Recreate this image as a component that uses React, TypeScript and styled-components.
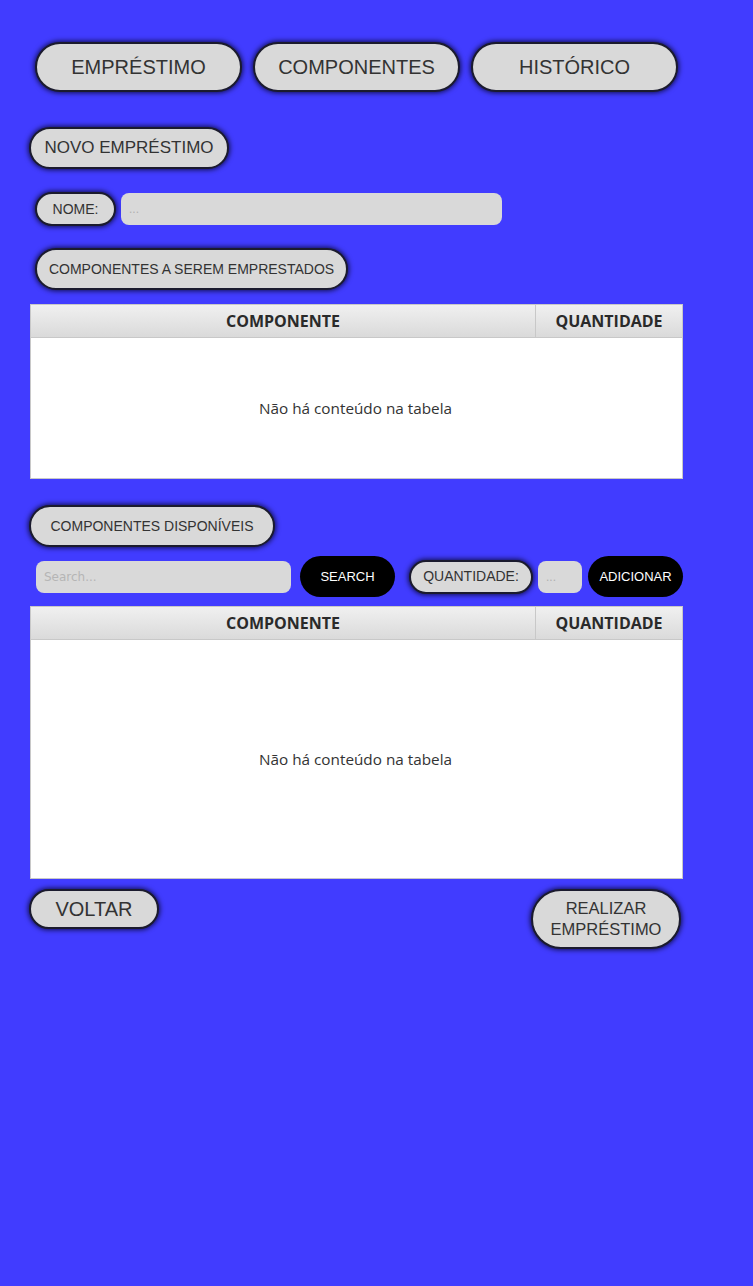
import React from "react";
import styled, { createGlobalStyle } from "styled-components";

const Global = createGlobalStyle`
  html, body { margin: 0; padding: 0; background: #413cff; }
  body { font-family: "Liberation Sans", Arial, sans-serif; min-height: 1286px; }
  * { box-sizing: border-box; }
`;

const Page = styled.div`
  min-height: 1286px;
  background: #413cff;
  padding: 42px 0 0 29px;
  width: 753px;
`;

const Nav = styled.nav`
  display: flex;
  gap: 11px;
  padding-left: 6px;
`;

const Pill = styled.div<{ $w?: number; $h: number; $fs: number; $lh?: number }>`
  display: inline-flex;
  align-items: center;
  justify-content: center;
  text-align: center;
  width: ${(p) => (p.$w ? `${p.$w}px` : "auto")};
  height: ${(p) => p.$h}px;
  padding: 0 12px;
  background: #d9d9d9;
  color: #333;
  font-size: ${(p) => p.$fs}px;
  line-height: ${(p) => p.$lh ?? 1.2};
  border: 2px solid #1b1b2e;
  border-radius: 999px;
  box-shadow: 0 0 5px 1px rgba(0, 0, 20, 0.75);
  white-space: nowrap;
`;

const Section = styled.div<{ $mt: number; $ml?: number }>`
  margin-top: ${(p) => p.$mt}px;
  margin-left: ${(p) => p.$ml ?? 0}px;
  display: flex;
  align-items: center;
`;

const TextInput = styled.input<{ $w: number; $h?: number }>`
  width: ${(p) => p.$w}px;
  height: ${(p) => p.$h ?? 32}px;
  background: #d9d9d9;
  border: none;
  border-radius: 8px;
  padding: 0 8px;
  font-family: "Liberation Sans", Arial, sans-serif;
  font-size: 12px;
  outline: none;
  &::placeholder { color: #b0b0b0; }
`;

const SearchInput = styled(TextInput)`
  font-family: "DejaVu Sans", sans-serif;
  font-size: 12px;
  &::placeholder { color: #b5b5b5; }
`;

const BlackButton = styled.button`
  width: 95px;
  height: 41px;
  border: none;
  border-radius: 999px;
  background: #000;
  color: #fff;
  font-family: "Liberation Sans", Arial, sans-serif;
  font-size: 13px;
  padding: 0;
`;

const Table = styled.div<{ $h: number }>`
  width: 653px;
  height: ${(p) => p.$h}px;
  border: 1px solid #c8c8c8;
  background: #fff;
  display: flex;
  flex-direction: column;
  font-family: "Open Sans", "Noto Sans", sans-serif;
`;

const HeadRow = styled.div`
  display: grid;
  grid-template-columns: 505px 1fr;
  height: 33px;
  border-bottom: 1px solid #c8c8c8;
  background: linear-gradient(#f0f0f0, #dadada);
`;

const HeadCell = styled.div<{ $last?: boolean }>`
  display: flex;
  align-items: center;
  justify-content: center;
  font-weight: 700;
  font-size: 16px;
  color: #2a2a2a;
  border-right: ${(p) => (p.$last ? "none" : "1px solid #c8c8c8")};
`;

const Empty = styled.div`
  flex: 1;
  display: flex;
  align-items: center;
  justify-content: center;
  font-size: 15.3px;
  color: #333;
  padding-right: 2px;
`;

const Footer = styled.div`
  margin-top: 10px;
  width: 652px;
  display: flex;
  justify-content: space-between;
  align-items: flex-start;
`;

const DataTable = ({ h }: { h: number }) => (
  <Table $h={h}>
    <HeadRow>
      <HeadCell>COMPONENTE</HeadCell>
      <HeadCell $last>QUANTIDADE</HeadCell>
    </HeadRow>
    <Empty>Não há conteúdo na tabela</Empty>
  </Table>
);

export default function App() {
  return (
    <>
      <Global />
      <Page>
        <Nav>
          <Pill $w={207} $h={50} $fs={20}>EMPRÉSTIMO</Pill>
          <Pill $w={207} $h={50} $fs={20}>COMPONENTES</Pill>
          <Pill $w={207} $h={50} $fs={20}>HISTÓRICO</Pill>
        </Nav>

        <Section $mt={35}>
          <Pill $w={200} $h={42} $fs={17}>NOVO EMPRÉSTIMO</Pill>
        </Section>

        <Section $mt={23} $ml={6}>
          <Pill $w={81} $h={34} $fs={14}>NOME:</Pill>
          <TextInput $w={381} placeholder="..." style={{ marginLeft: 5 }} />
        </Section>

        <Section $mt={22} $ml={6}>
          <Pill $w={313} $h={42} $fs={14}>COMPONENTES A SEREM EMPRESTADOS</Pill>
        </Section>

        <Section $mt={14} $ml={1}>
          <DataTable h={175} />
        </Section>

        <Section $mt={26}>
          <Pill $w={246} $h={42} $fs={14}>COMPONENTES DISPONÍVEIS</Pill>
        </Section>

        <Section $mt={9} $ml={7}>
          <SearchInput $w={255} placeholder="Search..." />
          <BlackButton style={{ marginLeft: 9 }}>SEARCH</BlackButton>
          <Pill $w={124} $h={34} $fs={14} style={{ marginLeft: 14 }}>QUANTIDADE:</Pill>
          <TextInput $w={44} placeholder="..." style={{ marginLeft: 5 }} />
          <BlackButton style={{ marginLeft: 6 }}>ADICIONAR</BlackButton>
        </Section>

        <Section $mt={9} $ml={1}>
          <DataTable h={273} />
        </Section>

        <Footer>
          <Pill $w={130} $h={40} $fs={20}>VOLTAR</Pill>
          <Pill $w={150} $h={60} $fs={16.5} $lh={1.3} style={{ whiteSpace: "normal" }}>
            REALIZAR<br />EMPRÉSTIMO
          </Pill>
        </Footer>
      </Page>
    </>
  );
}
